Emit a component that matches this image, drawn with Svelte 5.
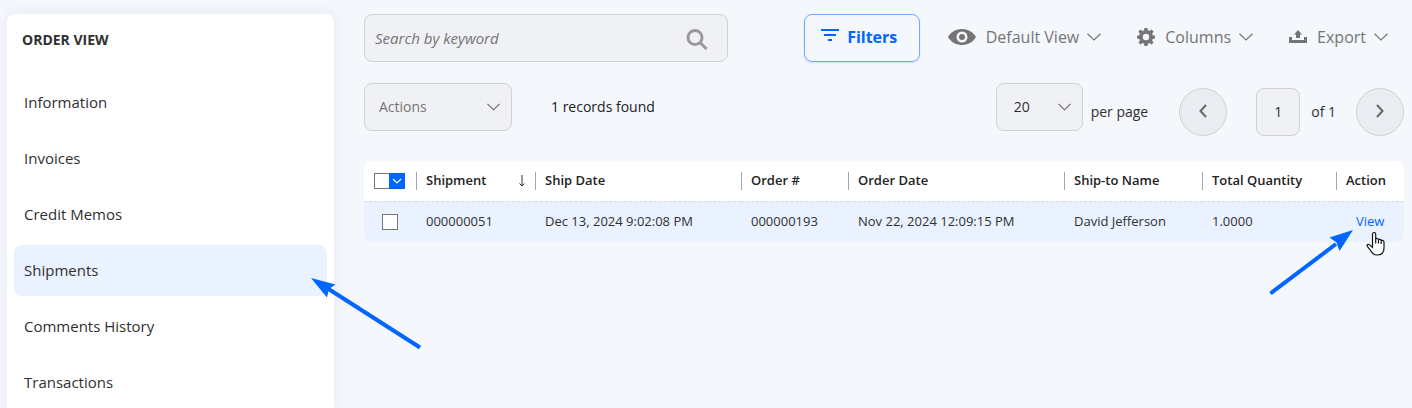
<script>
  const links = ['Information', 'Invoices', 'Credit Memos', 'Shipments', 'Comments History', 'Transactions'];
  const current = 'Shipments';
  const columns = [
    { key: 'shipment', label: 'Shipment', sorted: true },
    { key: 'shipDate', label: 'Ship Date' },
    { key: 'order', label: 'Order #' },
    { key: 'orderDate', label: 'Order Date' },
    { key: 'shipTo', label: 'Ship-to Name' },
    { key: 'quantity', label: 'Total Quantity' },
  ];
  const rows = [
    {
      shipment: '000000051',
      shipDate: 'Dec 13, 2024 9:02:08 PM',
      order: '000000193',
      orderDate: 'Nov 22, 2024 12:09:15 PM',
      shipTo: 'David Jefferson',
      quantity: '1.0000',
    },
  ];
</script>

{#snippet chevron()}
  <svg class="chevron" viewBox="0 0 14 8" aria-hidden="true"><path d="M.5 .7 7 7 13.500 .7" /></svg>
{/snippet}

<div class="page">
  <aside class="sidebar">
    <h2>ORDER VIEW</h2>
    <nav aria-label="Order view">
      {#each links as link}
        <a href="#{link.toLowerCase().replace(' ', '-')}" class:active={link === current}>{link}</a>
      {/each}
    </nav>
  </aside>

  <main>
    <div class="bar">
      <div class="search">
        <input type="text" placeholder="Search by keyword" aria-label="Search by keyword" />
        <button aria-label="Search">
          <svg width="22" height="22" viewBox="0 0 22 22"><circle cx="9" cy="8.500" r="7" /><path d="m14 13.500 6.500 6.500" /></svg>
        </button>
      </div>
      <div class="tools">
        <button class="filters">
          <svg width="20" height="14" viewBox="0 0 20 14" aria-hidden="true"><path d="M1 1h18v2H1zM4 6h12v2H4zM8 11h4v2H8z" /></svg>
          Filters
        </button>
        <button class="tool view">
          <svg width="28" height="16" viewBox="0 0 28 16" aria-hidden="true"><path fill-rule="evenodd" d="M0 8C6-2.700 22-2.700 28 8 22 18.700 6 18.700 0 8ZM14 2.500a5.500 5.500 0 1 0 0 11 5.500 5.500 0 0 0 0-11ZM14 5a3 3 0 1 1 0 6 3 3 0 0 1 0-6Z" /></svg>
          <span>Default View</span>
          {@render chevron()}
        </button>
        <button class="tool">
          <svg width="18" height="18" viewBox="0 0 18 18" aria-hidden="true"><path fill-rule="evenodd" d="M7.500 0h3l.5 2.500 1.400.6L14.600 1.600l2 2-1.500 2.200.6 1.500 2.300.4v2.700l-2.300.5-.6 1.500 1.500 2.200-2 2-2.200-1.500-1.400.6-.5 2.300h-3L7 15.700l-1.400-.6-2.200 1.500-2-2 1.500-2.200-.6-1.500L0 10.400V7.700l2.300-.4.6-1.500-1.500-2.200 2-2 2.200 1.500L7 2.500ZM9 5.800a3.200 3.200 0 1 0 0 6.400 3.200 3.200 0 0 0 0-6.400Z" /></svg>
          <span>Columns</span>
          {@render chevron()}
        </button>
        <button class="tool">
          <svg width="18" height="14" viewBox="0 0 18 14" aria-hidden="true"><path d="M9 0l4 4.500h-2V8H7V4.500H5ZM0 7h3v3h12V7h3v6H0Z" /></svg>
          <span>Export</span>
          {@render chevron()}
        </button>
      </div>
    </div>

    <div class="bar second">
      <div class="select actions">
        <select aria-label="Actions"><option>Actions</option></select>
        {@render chevron()}
      </div>
      <p class="count">1 records found</p>
      <div class="pager">
        <div class="select size">
          <select id="page-size"><option>20</option></select>
          {@render chevron()}
        </div>
        <label for="page-size">per page</label>
        <button class="round" aria-label="Previous page"><svg width="8" height="14" viewBox="0 0 8 14"><path d="M7 1 1.500 7 7 13" /></svg></button>
        <input id="page-number" type="text" value="1" />
        <label for="page-number">of 1</label>
        <button class="round" aria-label="Next page"><svg width="8" height="14" viewBox="0 0 8 14"><path d="M1 1l5.500 6L1 13" /></svg></button>
      </div>
    </div>

    <table>
      <colgroup>
        <col class="c-check" /><col class="c-shipment" /><col class="c-date" /><col class="c-order" />
        <col class="c-odate" /><col class="c-name" /><col class="c-qty" /><col class="c-action" />
      </colgroup>
      <thead>
        <tr>
          <th>
            <div class="mass">
              <input type="checkbox" aria-label="Select all" />
              <button aria-label="Selection options"><svg width="10" height="6" viewBox="0 0 10 6"><path d="m1 1 4 4 4-4" /></svg></button>
            </div>
          </th>
          {#each columns as column}
            <th>
              <div class="head">
                {column.label}
                {#if column.sorted}
                  <svg width="8" height="12" viewBox="0 0 8 12" aria-hidden="true"><path d="M4 0v11M1.500 8.500 4 11l2.500-2.500" /></svg>
                {/if}
              </div>
            </th>
          {/each}
          <th><div class="head">Action</div></th>
        </tr>
      </thead>
      <tbody>
        {#each rows as row}
          <tr>
            <td class="pick"><input type="checkbox" aria-label="Select {row.shipment}" /></td>
            {#each columns as column}
              <td>{row[column.key]}</td>
            {/each}
            <td class="action"><a href="#view">View</a></td>
          </tr>
        {/each}
      </tbody>
    </table>
  </main>

  <svg class="arrow menu-arrow" width="112" height="76" viewBox="0 0 112 76" aria-hidden="true">
    <path d="m17 12 93 59.500" /><path class="tip" d="M1 2 25.500 8.500 19 13 17 21.500Z" />
  </svg>
  <svg class="arrow view-arrow" width="86" height="68" viewBox="0 0 86 68" aria-hidden="true">
    <path d="M1.500 65.500 67 16" /><path class="tip" d="M84 2 60.500 9.500 67.500 14.500 70.500 23Z" />
  </svg>
  <svg class="pointer" width="20" height="26" viewBox="0 0 20 26" aria-hidden="true">
    <path d="M6.500 14V3.300c0-2.400 3.200-2.400 3.200 0V8c.8-.9 2.600-.7 2.800.7.900-.7 2.500-.4 2.700.9 1.300-.7 2.800 0 2.800 1.600V17c0 4.500-2.500 7-6.700 7-3.300 0-5-1.400-6.400-4L1.400 15.400c-.9-1.600.9-2.700 2.200-1.500l2.900 2.600ZM9.700 8v4.500M12.500 9v3.500M15.200 10v3" />
  </svg>
</div>

<style>
  :global(body) { margin: 0; background: #f4f7fc; }
  * { box-sizing: border-box; }
  .page {
    position: relative;
    display: grid;
    grid-template-columns: 327px minmax(0, 1fr);
    gap: 30px;
    min-height: 100vh;
    padding: 14px 8px 0 7px;
    overflow: hidden;
    color: #303030;
    font: 14px/20px "Open Sans", sans-serif;
  }
  button, input, select { margin: 0; font: inherit; }
  button { padding: 0; border: 0; background: none; cursor: pointer; }
  a { color: inherit; text-decoration: none; }

  .sidebar {
    padding: 16px 7px 0;
    border-radius: 8px 8px 0 0;
    background: #fff;
    box-shadow: 0 0 16px rgba(40, 70, 110, .07);
  }
  h2 { margin: 0 8px 27px; font-size: 14px; line-height: 20px; font-weight: 700; }
  nav { display: grid; gap: 5px; }
  nav a { padding: 15px 10px 16px; border-radius: 8px; font-size: 15px; line-height: 20px; }
  nav a.active { background: #eaf2ff; }

  .bar { display: flex; align-items: center; justify-content: space-between; }
  .search {
    display: flex;
    align-items: center;
    flex: 0 1 364px;
    height: 48px;
    padding: 0 19px 0 10px;
    border: 1px solid #d1d1d1;
    border-radius: 8px;
    background: #f0f1f5;
  }
  .search input { flex: 1; min-width: 0; padding: 0; border: 0; outline: 0; background: none; font-size: 15px; font-style: italic; }
  .search input::placeholder { color: #757575; opacity: 1; }
  .search button { display: flex; padding-top: 4px; }
  .search svg { fill: none; stroke: #999; stroke-width: 3; }

  .tools { display: flex; align-items: center; padding-right: 16px; gap: 36px; font-size: 16px; color: #757575; }
  .filters {
    display: flex;
    align-items: center;
    justify-content: center;
    gap: 7px;
    width: 116px;
    height: 48px;
    padding: 0 6px 2px 0;
    margin-right: -8px;
    border: 1px solid #6ea8ff;
    border-radius: 8px;
    box-shadow: 0 1px 2px rgba(0, 100, 255, .15);
    color: #06f;
    font-weight: 700;
  }
  .filters svg { margin-bottom: 4px; }
  .filters svg, .tool svg { fill: currentColor; }
  .tool { display: flex; align-items: center; gap: 10px; padding-bottom: 3px; color: #757575; }
  .tool span { margin-right: -2px; }
  .chevron { width: 14px; height: 8px; flex: none; }
  .tools .chevron { fill: none; stroke: #757575; stroke-width: 1.200px; }

  .second { align-items: flex-start; margin-top: 21px; }
  .select { position: relative; height: 48px; }
  .select select {
    appearance: none;
    width: 100%;
    height: 100%;
    padding: 0 30px 0 14px;
    border: 1px solid #d1d1d1;
    border-radius: 8px;
    background: #f0f1f5;
    color: inherit;
  }
  .select .chevron { position: absolute; top: 20px; right: 12px; width: 13px; fill: none; stroke: #666; stroke-width: 1.200px; pointer-events: none; }
  .actions { width: 148px; color: #757575; }
  .size { width: 87px; align-self: flex-start; }
  .size select { padding-left: 17px; }
  .count { flex: 1; margin: 14px 0 0 39px; color: #222; }
  .pager { display: flex; align-items: flex-end; height: 53px; }
  .pager label { margin: 0 0 14px 8px; }
  .round {
    display: grid;
    place-items: center;
    width: 48px;
    height: 48px;
    padding-bottom: 2px;
    margin-left: 31px;
    border: 1px solid #d1d1d1;
    border-radius: 50%;
    background: #e9ecf1;
  }
  .round svg { fill: none; stroke: #666; stroke-width: 2; }
  label + .round:last-child { margin-left: 20px; }
  .pager > input {
    width: 44px;
    height: 48px;
    padding-bottom: 2px;
    margin-left: 29px;
    border: 1px solid #d1d1d1;
    border-radius: 8px;
    background: #f0f1f5;
    color: inherit;
    text-align: center;
  }
  .pager > input + label { margin-left: 11px; }

  table {
    width: 100%;
    margin-top: 25px;
    table-layout: fixed;
    border-spacing: 0;
    border-radius: 8px;
    overflow: hidden;
    background: #fff;
    font-size: 13px;
    line-height: 18px;
  }
  .c-check { width: 52px; }
  .c-shipment { width: 119px; }
  .c-date { width: 206px; }
  .c-order { width: 107px; }
  .c-odate { width: 216px; }
  .c-name { width: 138px; }
  .c-qty { width: 134px; }
  .c-action { width: 68px; }
  th { height: 40px; padding: 0; text-align: left; font-weight: 600; color: #222; }
  .head { display: flex; align-items: center; justify-content: space-between; padding: 0 9px 2px; border-left: 1px solid #a0a5b0; line-height: 16px; white-space: nowrap; }
  .head svg { margin-top: 2px; fill: none; stroke: #303030; stroke-width: 1; }
  td { height: 41px; padding: 0 0 2px 10px; border-top: 1px dashed #d6dbe4; background: #eaf2ff; white-space: nowrap; }
  td.pick { padding: 0 0 0 18px; }
  td.action { padding-left: 20px; color: #06f; }
  input[type='checkbox'] { appearance: none; display: block; width: 16px; height: 16px; border: 1px solid #767676; background: #fff; }
  .mass { display: flex; padding-left: 10px; }
  .mass button { display: grid; place-items: center; width: 16px; height: 16px; margin-left: -1px; background: #06f; }
  .mass svg { fill: none; stroke: #fff; stroke-width: 1.200px; }

  .arrow { position: absolute; fill: none; stroke: #06f; stroke-width: 4; pointer-events: none; }
  .arrow .tip { fill: #06f; stroke: none; }
  .menu-arrow { top: 276px; left: 310px; }
  .view-arrow { top: 228px; right: 57px; }
  .pointer { position: absolute; top: 231px; right: 26px; fill: #fff; stroke: #111; stroke-width: 1.200px; pointer-events: none; }
</style>
